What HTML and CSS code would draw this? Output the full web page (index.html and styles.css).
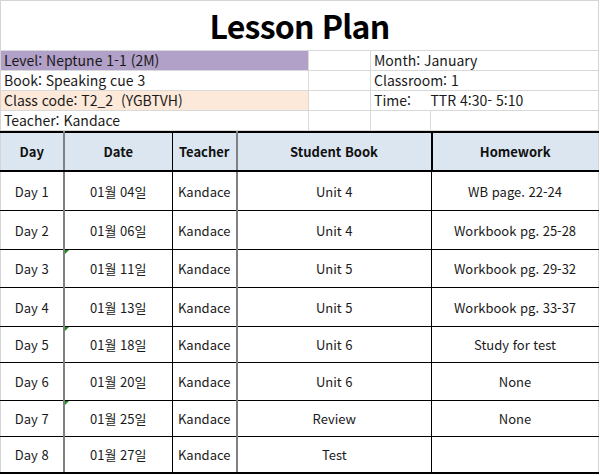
FILE: index.html
```html
<!DOCTYPE html>
<html lang="ko">
<head>
<meta charset="utf-8">
<title>Lesson Plan</title>
<link rel="stylesheet" href="styles.css">
</head>
<body>
<div class="sheet">
  <div class="title">Lesson Plan</div>
  <div class="info">
    <div class="c a purple">Level: Neptune 1-1 (2M)</div>
    <div class="c b"></div>
    <div class="c cd">Month: January</div>
    <div class="c a">Book: Speaking cue 3</div>
    <div class="c b"></div>
    <div class="c cd">Classroom: 1</div>
    <div class="c a peach pre">Class code: T2_2  (YGBTVH)</div>
    <div class="c b"></div>
    <div class="c cd pre">Time:     TTR 4:30- 5:10</div>
    <div class="c a">Teacher: Kandace</div>
    <div class="c b"></div>
    <div class="c c1"></div>
    <div class="c d"></div>
  </div>
  <table class="plan">
    <colgroup>
      <col class="w-day"><col class="w-date"><col class="w-teacher"><col class="w-book"><col class="w-hw">
    </colgroup>
    <thead>
      <tr>
        <th class="gr">Day</th><th>Date</th><th class="gr">Teacher</th><th class="bk">Student Book</th><th>Homework</th>
      </tr>
    </thead>
    <tbody>
      <tr class="r1"><td class="gr">Day 1</td><td>01월 04일</td><td class="gr">Kandace</td><td class="bk">Unit 4</td><td>WB page. 22-24</td></tr>
      <tr class="r2"><td class="gr">Day 2</td><td>01월 06일</td><td class="gr">Kandace</td><td class="bk">Unit 4</td><td>Workbook pg. 25-28</td></tr>
      <tr class="r3"><td class="gr">Day 3</td><td class="flag">01월 11일</td><td class="gr">Kandace</td><td class="bk">Unit 5</td><td>Workbook pg. 29-32</td></tr>
      <tr class="r4"><td class="gr">Day 4</td><td>01월 13일</td><td class="gr">Kandace</td><td class="bk">Unit 5</td><td>Workbook pg. 33-37</td></tr>
      <tr class="r5"><td class="gr">Day 5</td><td class="flag">01월 18일</td><td class="gr">Kandace</td><td class="bk">Unit 6</td><td>Study for test</td></tr>
      <tr class="r6"><td class="gr">Day 6</td><td>01월 20일</td><td class="gr">Kandace</td><td class="bk">Unit 6</td><td>None</td></tr>
      <tr class="r7"><td class="gr">Day 7</td><td class="flag">01월 25일</td><td class="gr">Kandace</td><td class="bk">Review</td><td>None</td></tr>
      <tr class="r8"><td class="gr">Day 8</td><td>01월 27일</td><td class="gr">Kandace</td><td class="bk">Test</td><td></td></tr>
    </tbody>
  </table>
</div>
</body>
</html>
```
FILE: styles.css
```css
html, body {
  margin: 0;
  padding: 0;
  background: #ffffff;
}
body {
  font-family: "Noto Sans CJK KR", "Noto Sans", sans-serif;
  font-size: 14px;
  color: #1a1a1a;
}
.sheet {
  width: 599px;
  border-left: 1px solid #d4d4d4;
  border-right: 1px solid #d4d4d4;
  border-top: 1px solid #d4d4d4;
  box-sizing: border-box;
}
.title {
  height: 50px;
  font-size: 32px;
  letter-spacing: -0.8px;
  font-weight: bold;
  color: #000;
  text-align: center;
  line-height: 48px;
  border-bottom: 1px solid #d9d9d9;
  box-sizing: border-box;
}
.info {
  display: grid;
  grid-template-columns: 308px 62px 60px 1fr;
  grid-auto-rows: 20px;
}
.info .c {
  border-bottom: 1px solid #d9d9d9;
  border-right: 1px solid #d9d9d9;
  padding-left: 3px;
  line-height: 19px;
  white-space: nowrap;
  overflow: hidden;
}
.info .a { grid-column: 1; }
.info .b { grid-column: 2; }
.info .cd { grid-column: 3 / 5; border-right: none; }
.info .c1 { grid-column: 3; }
.info .d { grid-column: 4; border-right: none; }
.info .pre { white-space: pre; }
.purple { background: #b1a0c7; }
.peach { background: #fde9d9; }

.plan {
  width: 598px;
  margin-left: -1px;
  border-collapse: collapse;
  table-layout: fixed;
  font-size: 13px;
}
.w-day { width: 63px; }
.w-date { width: 109px; }
.w-teacher { width: 64px; }
.w-book { width: 195px; }
.w-hw { width: 167px; }
.plan th, .plan td {
  text-align: center;
  padding: 0;
  border-right: 1px solid #000;
  border-bottom: 1px solid #000;
  white-space: nowrap;
}
.plan th {
  background: #dce6f1;
  font-weight: bold;
  color: #111;
  height: 37px;
  border-top: 2px solid #000;
  border-bottom: 2px solid #000;
}
.plan th:first-child, .plan td:first-child { border-left: 1px solid #d4d4d4; }
.plan th:last-child, .plan td:last-child { border-right: 1px solid #d4d4d4; }
.plan .gr { border-right: 2px solid #808080; }
.plan th.bk { border-right: 2px solid #000; }
.plan td.bk { border-right: 1px solid #000; }
.plan tbody tr:last-child td { border-bottom: 2px solid #000; }
.r1 td { height: 38px; }
.r2 td { height: 38px; }
.r3 td { height: 37px; }
.r4 td { height: 38px; }
.r5 td { height: 35px; }
.r6 td { height: 37px; }
.r7 td { height: 35px; }
.r8 td { height: 35px; }
.plan td.flag { position: relative; }
.plan td.flag::before {
  content: "";
  position: absolute;
  left: 0;
  top: 0;
  border-top: 4px solid #1e8a1e;
  border-right: 4px solid transparent;
}
```
